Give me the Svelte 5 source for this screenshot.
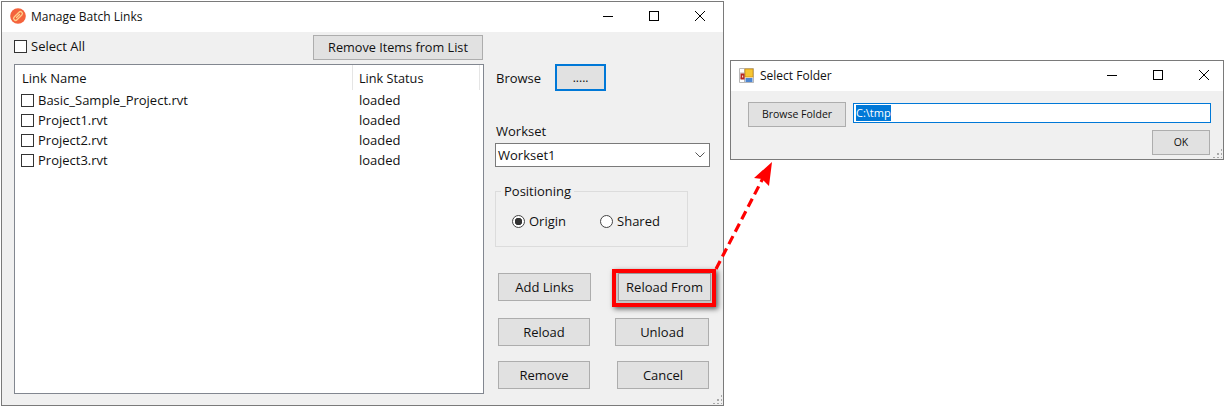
<script>
  const links = ['Basic_Sample_Project.rvt', 'Project1.rvt', 'Project2.rvt', 'Project3.rvt'];
</script>

<div class="desktop">
  <section class="window main-window">
    <header class="titlebar">
      <svg class="app-icon" width="16" height="16" viewBox="0 0 16 16">
        <circle cx="8" cy="8" r="7.8" fill="#f4633c" />
        <path d="M7 6.2L9 4.2A1.6 1.6 0 0 1 11.8 7L9.8 9M6.2 7L4.2 9A1.6 1.6 0 0 0 7 11.8L9 9.8M6.5 9.5L9.5 6.5" stroke="#ffd08a" stroke-width="1.3" stroke-linecap="round" fill="none" />
      </svg>
      <span class="title">Manage Batch Links</span>
      <div class="caption-buttons">
        <svg width="12" height="12" viewBox="0 0 12 12"><path d="M1 6.5H11" stroke="#000" fill="none" /></svg>
        <svg width="12" height="12" viewBox="0 0 12 12"><rect x="1.5" y="1.5" width="9" height="9" stroke="#000" fill="none" /></svg>
        <svg width="12" height="12" viewBox="0 0 12 12"><path d="M1 1L11 11M11 1L1 11" stroke="#000" fill="none" /></svg>
      </div>
    </header>

    <div class="main-body">
      <div class="left-pane">
        <div class="list-toolbar">
          <label class="check"><span class="box"></span>Select All</label>
          <button class="btn remove-items">Remove Items from List</button>
        </div>
        <div class="list">
          <div class="list-head">
            <span class="col-name">Link Name</span>
            <span class="col-status">Link Status</span>
          </div>
          {#each links as link}
            <div class="list-row">
              <span class="col-name"><span class="box"></span>{link}</span>
              <span class="col-status">loaded</span>
            </div>
          {/each}
        </div>
      </div>

      <div class="right-pane">
        <div class="browse-row">
          <span>Browse</span>
          <button class="btn browse-btn">.....</button>
        </div>
        <div class="field-label">Workset</div>
        <div class="combo">
          <span>Workset1</span>
          <svg width="10" height="6" viewBox="0 0 10 6"><path d="M0.5 0.5L5 5L9.5 0.5" stroke="#555" fill="none" /></svg>
        </div>
        <fieldset class="group">
          <legend>Positioning</legend>
          <div class="radios">
            <label class="radio"><span class="dot on"></span>Origin</label>
            <label class="radio shared"><span class="dot"></span>Shared</label>
          </div>
        </fieldset>
        <div class="actions">
          <div class="action-row first">
            <button class="btn add">Add Links</button>
            <div class="highlight"><button class="btn from">Reload From</button></div>
          </div>
          <div class="action-row">
            <button class="btn add narrow">Reload</button>
            <button class="btn unload">Unload</button>
          </div>
          <div class="action-row">
            <button class="btn add narrow">Remove</button>
            <button class="btn cancel">Cancel</button>
          </div>
        </div>
      </div>
    </div>
    <span class="grip"></span>
  </section>

  <section class="window folder-window">
    <header class="titlebar small">
      <svg class="app-icon" width="15" height="15" viewBox="0 0 15 15">
        <path d="M0.5 0.5H14.5V14.5H0.5ZM0.5 5H6M5.5 0.5V14.5M0.5 10H6M6 14.5H14.5" stroke="#b8b8b8" fill="#fff" />
        <rect x="6" y="1" width="8" height="8" fill="#f6c632" stroke="#d08f14" stroke-width="0.8" />
        <rect x="1.5" y="5.5" width="4" height="6" fill="#b8281e" />
        <rect x="3" y="7.5" width="1.2" height="2" fill="#f4d8d0" />
        <rect x="6.5" y="10" width="7" height="4" fill="#4f86d0" />
      </svg>
      <span class="title">Select Folder</span>
      <div class="caption-buttons">
        <svg width="12" height="12" viewBox="0 0 12 12"><path d="M1 6.5H11" stroke="#000" fill="none" /></svg>
        <svg width="12" height="12" viewBox="0 0 12 12"><rect x="1.5" y="1.5" width="9" height="9" stroke="#000" fill="none" /></svg>
        <svg width="12" height="12" viewBox="0 0 12 12"><path d="M1 1L11 11M11 1L1 11" stroke="#000" fill="none" /></svg>
      </div>
    </header>
    <div class="folder-body">
      <div class="folder-row">
        <button class="btn browse-folder">Browse Folder</button>
        <div class="path-input"><span class="selected">C:\tmp</span></div>
      </div>
      <div class="ok-row"><button class="btn ok">OK</button></div>
    </div>
    <span class="grip"></span>
  </section>

  <svg class="arrow" width="1228" height="408" viewBox="0 0 1228 408">
    <path d="M716 269L763 178" stroke="#f00" stroke-width="3.2" stroke-dasharray="9 5" fill="none" />
    <path d="M772 162L754 178L762 179L769 186Z" fill="#f00" />
  </svg>
</div>

<style>
  :global(body) {
    background: #fff;
  }

  .desktop {
    position: relative;
    width: 1228px;
    height: 408px;
    overflow: hidden;
    font-family: "Open Sans", "Liberation Sans", sans-serif;
    font-size: 13px;
    color: #111;
  }

  .window {
    position: absolute;
    box-sizing: border-box;
    border: 1px solid #7a7a7a;
    background: #f0f0f0;
    display: flex;
    flex-direction: column;
  }

  .main-window {
    left: 1px;
    top: 1px;
    width: 723px;
    height: 405px;
  }

  .folder-window {
    left: 730px;
    top: 60px;
    width: 494px;
    height: 100px;
    font-size: 11px;
  }

  .titlebar {
    height: 30px;
    flex: none;
    box-sizing: border-box;
    padding: 0 0 2px 8px;
    background: #fff;
    display: flex;
    align-items: center;
  }

  .app-icon {
    flex: none;
    margin-right: 5px;
  }

  .small .app-icon {
    margin-right: 6px;
  }

  .title {
    font-size: 12px;
  }

  .caption-buttons {
    margin-left: auto;
    display: flex;
    gap: 34px;
    padding-right: 17px;
  }

  .small .caption-buttons {
    padding-right: 13px;
  }

  .btn {
    box-sizing: border-box;
    height: 28px;
    padding: 0;
    margin: 0;
    font: inherit;
    color: #111;
    background: #e1e1e1;
    border: 1px solid #adadad;
    border-radius: 0;
  }

  .main-body {
    flex: 1;
    display: flex;
  }

  .left-pane {
    width: 482px;
    padding: 3px 0 0 12px;
    box-sizing: border-box;
    flex: none;
  }

  .list-toolbar {
    display: flex;
    align-items: center;
    justify-content: space-between;
    height: 25px;
    margin-bottom: 4px;
    padding-right: 1px;
  }

  .check {
    display: flex;
    align-items: center;
    margin-top: -3px;
  }

  .box {
    box-sizing: border-box;
    display: inline-block;
    flex: none;
    width: 13px;
    height: 13px;
    background: #fff;
    border: 1px solid #333;
    margin-right: 4px;
  }

  .remove-items {
    width: 170px;
    height: 25px;
    padding-bottom: 1px;
    font-size: 12.7px;
  }

  .list {
    box-sizing: border-box;
    width: 470px;
    height: 330px;
    background: #fff;
    border: 1px solid #828790;
  }

  .list-head {
    display: flex;
    height: 25px;
    align-items: center;
  }

  .list-head .col-name {
    padding-left: 7px;
    border-right: 1px solid #e5e5e5;
    height: 100%;
    display: flex;
    align-items: center;
  }

  .list-head .col-status {
    width: 127px;
    padding-left: 6px;
    border-right: 1px solid #e5e5e5;
    height: 100%;
    display: flex;
    align-items: center;
    font-size: 12.7px;
  }

  .col-name {
    box-sizing: border-box;
    width: 338px;
    flex: none;
  }

  .col-status {
    box-sizing: border-box;
    padding-left: 6px;
  }

  .list-row {
    display: flex;
    align-items: center;
    height: 20px;
  }

  .list-row .col-name {
    display: flex;
    align-items: center;
    padding-left: 6px;
  }

  .right-pane {
    flex: 1;
    padding: 32px 0 0 11px;
    display: flex;
    flex-direction: column;
  }

  .browse-row {
    display: flex;
    align-items: center;
    gap: 14px;
    height: 27px;
    margin-left: 1px;
  }

  .browse-btn {
    width: 51px;
    height: 27px;
    border: 2px solid #0078d7;
    font-size: 12px;
  }

  .field-label {
    margin-top: 31px;
    margin-left: 1px;
    height: 21px;
    line-height: 18px;
  }

  .combo {
    box-sizing: border-box;
    width: 215px;
    height: 24px;
    display: flex;
    align-items: center;
    justify-content: space-between;
    padding: 0 4px 0 2px;
    background: #fff;
    border: 1px solid #7a7a7a;
  }

  .group {
    box-sizing: border-box;
    width: 193px;
    height: 65px;
    margin: 15px 0 0;
    padding: 0;
    border: 1px solid #dcdcdc;
  }

  .group legend {
    padding: 0 3px;
    margin-left: 5px;
  }

  .radios {
    display: flex;
    align-items: center;
    padding: 12px 0 0 16px;
  }

  .radio {
    display: flex;
    align-items: center;
    gap: 4px;
  }

  .shared {
    margin-left: 34px;
  }

  .dot {
    box-sizing: border-box;
    width: 13px;
    height: 13px;
    border: 1px solid #444;
    border-radius: 50%;
    background: #fff;
    display: inline-block;
  }

  .dot.on {
    background: radial-gradient(circle, #333 0 3.5px, #fff 4px);
  }

  .actions {
    margin-top: 26px;
    display: flex;
    flex-direction: column;
    margin-left: 3px;
  }

  .action-row {
    display: flex;
    height: 28px;
    margin-bottom: 15px;
  }

  .action-row.first {
    margin-bottom: 17px;
  }

  .add {
    width: 93px;
  }

  .add.narrow {
    width: 92px;
  }

  .highlight {
    margin-left: 21px;
    margin-top: -4px;
    height: 38px;
    box-sizing: border-box;
    padding: 0 1px 1px 2px;
    border: 4px solid #f00;
    background: #c4c4c4;
    box-shadow: 2px 2px 5px rgba(0, 0, 0, 0.6);
  }

  .from {
    width: 93px;
    height: 28px;
    border-color: #999;
  }

  .unload {
    width: 94px;
    margin-left: 25px;
  }

  .cancel {
    width: 92px;
    margin-left: 27px;
  }

  .grip {
    position: absolute;
    right: 1px;
    bottom: 1px;
    width: 10px;
    height: 10px;
    background-image: radial-gradient(circle, #a8a8a8 1.2px, transparent 1.3px);
    background-size: 4px 4px;
    clip-path: polygon(100% 0, 100% 100%, 0 100%);
  }

  .folder-body {
    flex: 1;
    padding: 11px 12px 0 17px;
  }

  .folder-row {
    display: flex;
    gap: 7px;
  }

  .browse-folder {
    width: 98px;
    height: 25px;
    padding-bottom: 2px;
    font-size: 10.5px;
  }

  .path-input {
    box-sizing: border-box;
    width: 358px;
    height: 20px;
    margin-top: 1px;
    background: #fff;
    border: 1px solid #0078d7;
    display: flex;
    align-items: center;
    padding-left: 2px;
  }

  .selected {
    background: #0078d7;
    color: #fff;
    line-height: 16px;
    font-size: 11px;
  }

  .ok-row {
    display: flex;
    justify-content: flex-end;
    margin-top: 3px;
    margin-right: 1px;
  }

  .ok {
    width: 58px;
    height: 25px;
    padding-bottom: 2px;
    font-size: 10.5px;
  }

  .arrow {
    position: absolute;
    left: 0;
    top: 0;
    pointer-events: none;
  }
</style>
